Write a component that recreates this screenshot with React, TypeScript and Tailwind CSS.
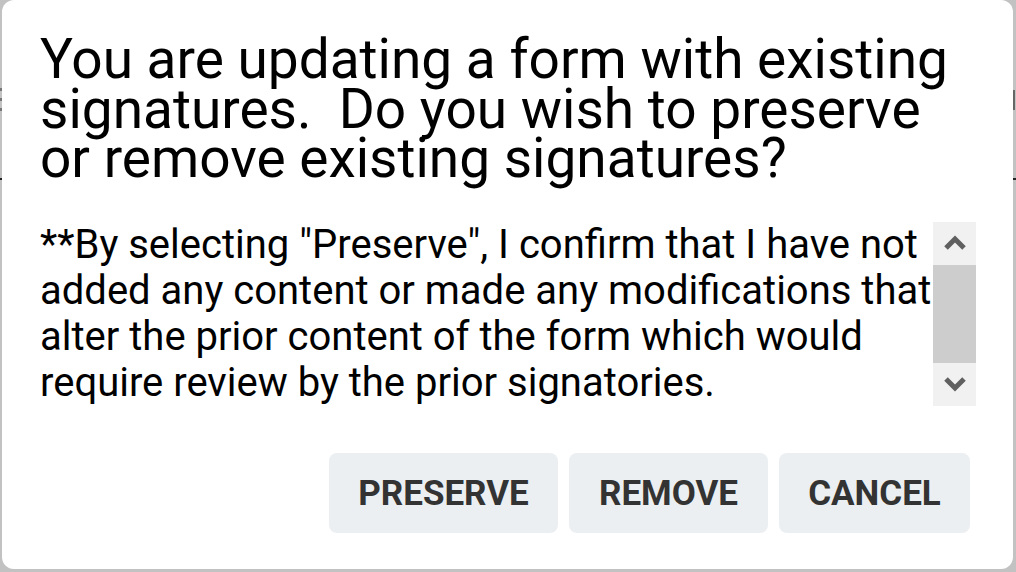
import React from "react";

export default function App() {
  return (
    <div className="w-[1016px] h-[572px] bg-[#c2c2c2] relative overflow-hidden" style={{ fontFamily: "Roboto, 'Liberation Sans', sans-serif" }}>
      <div className="absolute left-0 top-[88px] w-[2px] h-[3px] bg-[#777]" />
      <div className="absolute left-0 top-[98px] w-[2px] h-[3px] bg-[#777]" />
      <div className="absolute left-0 top-[108px] w-[2px] h-[3px] bg-[#777]" />
      <div className="absolute left-0 top-[178px] w-[2px] h-[2px] bg-[#222]" />
      <div className="absolute left-[1013px] top-[90px] w-[2px] h-[20px] bg-[#666]" />
      <div className="absolute left-[1013px] top-[178px] w-[3px] h-[2px] bg-[#222]" />
      <div className="ml-[2px] w-[1011px] h-[569px] bg-white rounded-[12px] flex flex-col pl-[38px] pr-[35px] pt-[35px]">
        <h1 className="w-[930px] text-[55px] leading-[49.5px] text-black font-normal">
          You are updating a form with existing signatures.&nbsp; Do you wish to preserve or remove existing signatures?
        </h1>
        <div className="flex mt-[38px] h-[184px]">
          <p className="w-[893px] text-[40px] leading-[46px] text-black overflow-hidden">
            **By selecting "Preserve", I confirm that I have not added any content or made any modifications that alter the prior content of the form which would require review by the prior signatories.
          </p>
          <div className="w-[43px] h-[184px] bg-[#f1f1f1] flex flex-col">
            <div className="h-[43px] flex items-center justify-center">
              <svg width="24" height="16" viewBox="0 0 24 16"><path d="M3 13 L12 4 L21 13" stroke="#606060" strokeWidth="5" fill="none" /></svg>
            </div>
            <div className="flex-1 bg-[#cdcdcd]" />
            <div className="h-[43px] flex items-center justify-center">
              <svg width="24" height="16" viewBox="0 0 24 16"><path d="M3 3 L12 12 L21 3" stroke="#606060" strokeWidth="5" fill="none" /></svg>
            </div>
          </div>
        </div>
        <div className="flex justify-end gap-[11px] mt-[47px] pr-[8px]">
          <button className="h-[80px] w-[229px] rounded-[8px] bg-[#eceff1] text-[#333] text-[35px] font-bold pt-[3px]">PRESERVE</button>
          <button className="h-[80px] w-[199px] rounded-[8px] bg-[#eceff1] text-[#333] text-[35px] font-bold pt-[3px]">REMOVE</button>
          <button className="h-[80px] w-[191px] rounded-[8px] bg-[#eceff1] text-[#333] text-[35px] font-bold pt-[3px]">CANCEL</button>
        </div>
      </div>
    </div>
  );
}
